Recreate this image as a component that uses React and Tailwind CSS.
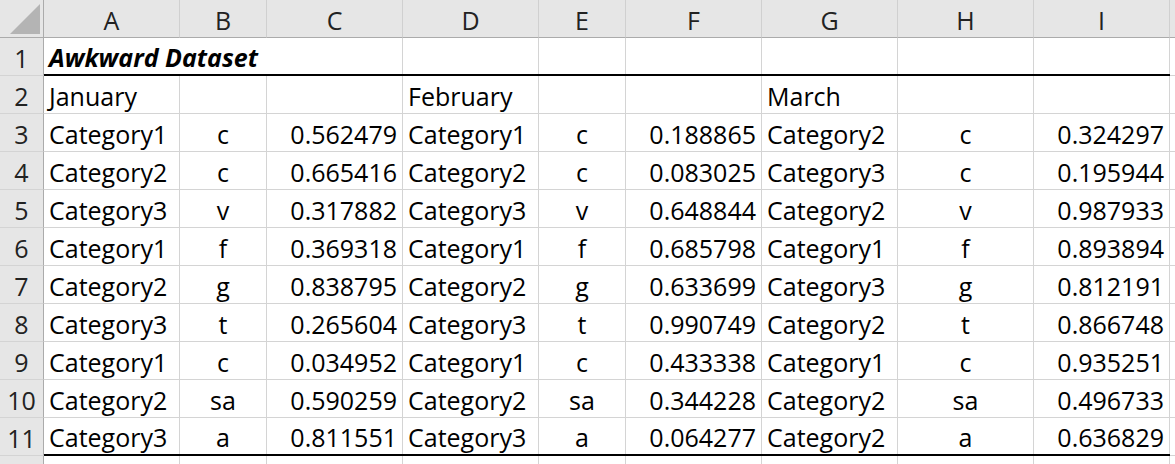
import React from 'react'

// column letters of the sheet
const COLS = ['A', 'B', 'C', 'D', 'E', 'F', 'G', 'H', 'I']

const DATA = [
  ['Category1', 'c', '0.562479', 'Category1', 'c', '0.188865', 'Category2', 'c', '0.324297'],
  ['Category2', 'c', '0.665416', 'Category2', 'c', '0.083025', 'Category3', 'c', '0.195944'],
  ['Category3', 'v', '0.317882', 'Category3', 'v', '0.648844', 'Category2', 'v', '0.987933'],
  ['Category1', 'f', '0.369318', 'Category1', 'f', '0.685798', 'Category1', 'f', '0.893894'],
  ['Category2', 'g', '0.838795', 'Category2', 'g', '0.633699', 'Category3', 'g', '0.812191'],
  ['Category3', 't', '0.265604', 'Category3', 't', '0.990749', 'Category2', 't', '0.866748'],
  ['Category1', 'c', '0.034952', 'Category1', 'c', '0.433338', 'Category1', 'c', '0.935251'],
  ['Category2', 'sa', '0.590259', 'Category2', 'sa', '0.344228', 'Category2', 'sa', '0.496733'],
  ['Category3', 'a', '0.811551', 'Category3', 'a', '0.064277', 'Category2', 'a', '0.636829'],
]

const gridCols = 'grid grid-cols-[44px_136px_87px_136px_136px_87px_136px_136px_136px_136px_1fr]'
const innerCols = 'col-span-9 grid grid-cols-[136px_87px_136px_136px_87px_136px_136px_136px_136px] border-b-2 border-black h-[38px]'

// alignment per column: text left, letters centred, numbers right
const align = (i) => {
  if (i % 3 === 1) return 'justify-center'
  if (i % 3 === 2) return 'justify-end pr-[5px]'
  return 'justify-start pl-[5px]'
}

const Cell = ({ children, className = '' }) => (
  <div className={`h-[38px] border-r border-b border-[#d4d4d4] flex items-center pt-[3px] overflow-visible whitespace-nowrap ${className}`}>
    {children}
  </div>
)

const RowHead = ({ n, className = '' }) => (
  <div className={`h-[38px] bg-[#e6e6e6] border-r border-r-[#ababab] border-b border-b-[#d4d4d4] flex items-center justify-center pt-[3px] text-[#222] ${className}`}>
    {n}
  </div>
)

export default function App() {
  return (
    <div className="w-[1175px] h-[464px] overflow-hidden bg-white text-black text-[25px] leading-none" style={{ fontFamily: '"Open Sans", "Noto Sans", sans-serif' }}>
      {/* column headers */}
      <div className={gridCols}>
        <div className="h-[38px] bg-[#e6e6e6] border-r border-b border-[#ababab] relative">
          <svg className="absolute right-[3px] bottom-[3px]" width="30" height="30" viewBox="0 0 30 30">
            <polygon points="30,0 30,30 0,30" fill="#b4b4b4" />
          </svg>
        </div>
        {COLS.map((c) => (
          <div key={c} className="h-[38px] bg-[#e6e6e6] border-r border-r-[#d0d0d0] border-b border-b-[#ababab] flex items-center justify-center pt-[3px] text-[#222]">
            {c}
          </div>
        ))}
        <div className="h-[38px] bg-[#e6e6e6] border-b border-[#ababab]" />
      </div>

      {/* row 1 - title */}
      <div className={gridCols}>
        <RowHead n="1" />
        <div className={innerCols}>
          <div className="h-[36px] flex items-center pl-[5px] pt-[3px] whitespace-nowrap overflow-visible font-bold italic">
            Awkward Dataset
          </div>
          <div className="h-[36px]" />
          <div className="h-[36px] border-r border-[#d4d4d4]" />
          {[0, 1, 2, 3, 4, 5].map((i) => (
            <div key={i} className="h-[36px] border-r border-[#d4d4d4]" />
          ))}
        </div>
        <div className="h-[38px] border-b border-[#d4d4d4]" />
      </div>

      {/* row 2 - months */}
      <div className={gridCols}>
        <RowHead n="2" />
        {['January', '', '', 'February', '', '', 'March', '', ''].map((t, i) => (
          <Cell key={i} className="pl-[5px]">{t}</Cell>
        ))}
        <div className="h-[38px] border-b border-[#d4d4d4]" />
      </div>

      {/* data rows */}
      {DATA.map((row, r) => (
        <div key={r} className={gridCols}>
          <RowHead n={r + 3} />
          {r === DATA.length - 1 ? (
            <div className={innerCols}>
              {row.map((v, i) => (
                <div key={i} className={`h-[36px] border-r border-[#d4d4d4] flex items-center pt-[3px] whitespace-nowrap ${align(i)}`}>
                  {v}
                </div>
              ))}
            </div>
          ) : (
            row.map((v, i) => (
              <Cell key={i} className={align(i)}>{v}</Cell>
            ))
          )}
          <div className="h-[38px] border-b border-[#d4d4d4]" />
        </div>
      ))}

      {/* row 12 partly visible */}
      <div className={gridCols}>
        <RowHead n="12" />
        {COLS.map((c) => (
          <Cell key={c} />
        ))}
        <div className="h-[38px]" />
      </div>
    </div>
  )
}
